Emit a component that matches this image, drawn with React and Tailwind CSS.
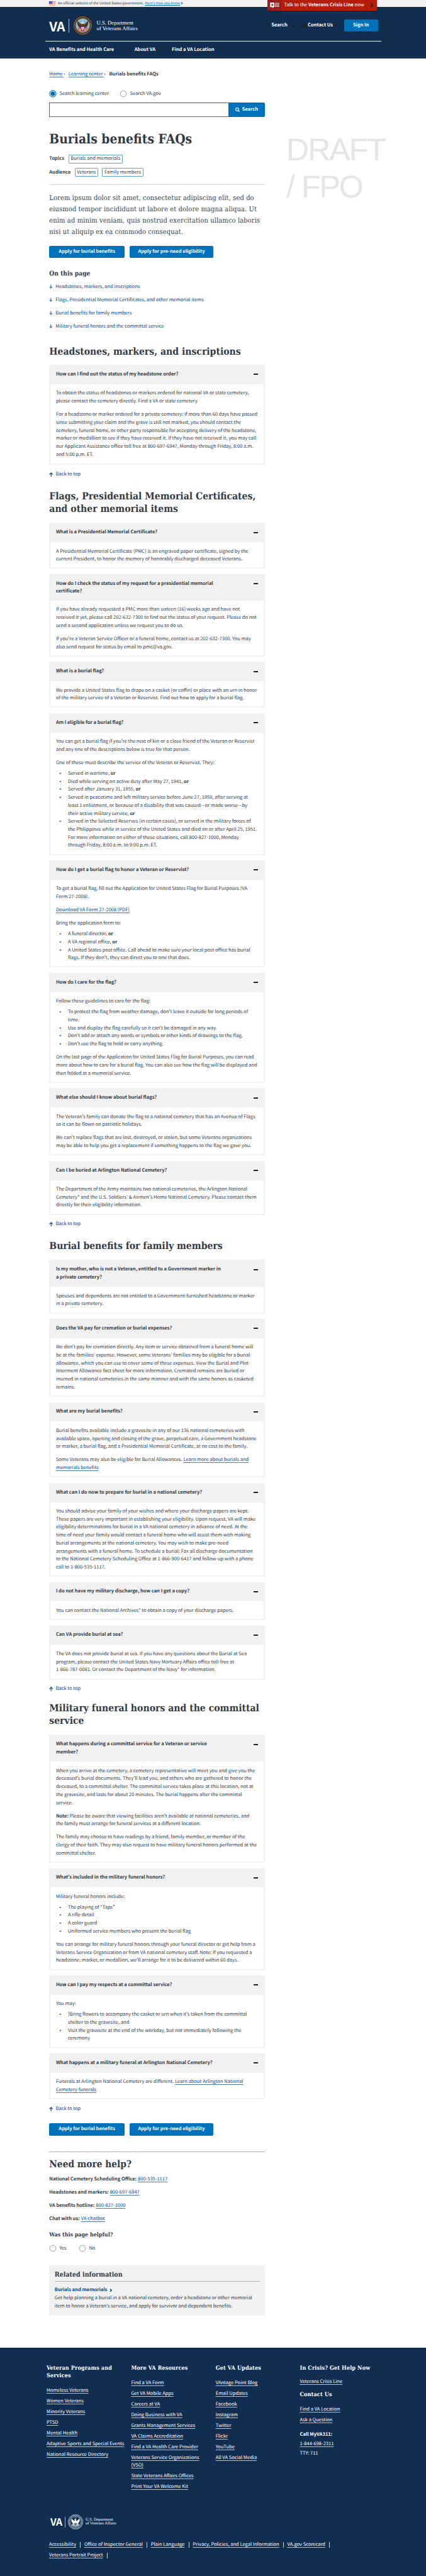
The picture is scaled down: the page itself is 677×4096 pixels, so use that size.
import React from "react";

const SANS = "font-['Noto_Sans_CJK_KR','Noto_Sans',sans-serif]";
const SLAB = "font-['DejaVu_Serif_Condensed','DejaVu_Serif',serif] [font-stretch:condensed]";
const LINK = "text-[#004795] underline decoration-[#004795]/70 decoration-1 underline-offset-[1.5px]";

function Seal({ mono, className }) {
  const gold = mono ? "#fff" : "#d9a62e";
  const rim = mono ? "#112e51" : "#1b1a3c";
  return (
    <svg viewBox="0 0 60 60" className={className}>
      <circle cx="30" cy="30" r="29.5" fill={rim} stroke={mono ? "#fff" : "#171630"} strokeWidth="1" />
      <circle cx="30" cy="30" r="27.6" fill="none" stroke={gold} strokeWidth="1.2" />
      <circle cx="30" cy="30" r="24.6" fill="none" stroke={gold} strokeWidth="2.6" strokeDasharray="1.6 1.3" opacity="0.75" />
      <circle cx="30" cy="30" r="21.4" fill={mono ? "#112e51" : "#7fb7dc"} stroke={gold} strokeWidth="1.3" />
      <path d="M14 41 A19.5 19.5 0 0 0 46 41 L38 33 H22 Z" fill={mono ? "#fff" : "#b9535a"} opacity={mono ? 0.55 : 1} />
      <path d="M17 44 L24 36 M43 44 L36 36 M21 47 L27 38 M39 47 L33 38" stroke="#fff" strokeWidth="1.6" />
      <path d="M28 27 C22 25 18 20 14 16 C12 26 15 34 23 38 L26 42 H34 L37 38 C45 34 48 26 46 16 C42 20 38 25 33 27 L31 21 L26 20 Z" fill={mono ? "#fff" : "#5a3418"} />
      <path d="M26 20 C28 17 33 18 33 22 L31 25 H28 Z" fill="#fff" />
      <path d="M25 32 H35 V38 C35 42 32 44 30 45 C28 44 25 42 25 38 Z" fill={mono ? "#112e51" : "#fff"} stroke={mono ? "#fff" : "#27418a"} strokeWidth="1" />
      <path d="M28.3 36 V43 M31.7 36 V43" stroke={mono ? "#fff" : "#b31b2a"} strokeWidth="1.2" />
      <path d="M25 32 H35 V35 H25 Z" fill={mono ? "#fff" : "#27418a"} />
      <g fill={mono ? "#fff" : "#f2d34a"}>
        <circle cx="26" cy="13" r="1" /><circle cx="30" cy="11.5" r="1" /><circle cx="34" cy="13" r="1" />
        <circle cx="28" cy="16" r="1" /><circle cx="32" cy="16" r="1" />
      </g>
    </svg>
  );
}

function Flag() {
  return (
    <svg viewBox="0 0 20 14" className="h-[7.4px] w-[10.6px]">
      <rect width="20" height="14" fill="#fff" />
      {[0, 4, 8, 12].map((y) => <rect key={y} y={y} width="20" height="2" fill="#f08a70" />)}
      <rect width="10" height="8" fill="#3b3fc0" />
      <path d="M1.5 2 H9 M1.5 4 H9 M1.5 6 H9" stroke="#fff" strokeWidth="0.8" strokeDasharray="1 1.2" />
    </svg>
  );
}

const Chevron = ({ className, d = "M2 1 L6 5 L2 9", box = "0 0 8 10", w = 2 }) => (
  <svg viewBox={box} className={className} fill="none" stroke="currentColor" strokeWidth={w}><path d={d} /></svg>
);
const Down = ({ className }) => <Chevron className={className} box="0 0 12 8" d="M1.5 1.5 L6 6 L10.5 1.5" w={2.6} />;

const Magnifier = ({ className }) => (
  <svg viewBox="0 0 14 14" className={className} fill="none" stroke="currentColor" strokeWidth="2">
    <circle cx="5.7" cy="5.7" r="4.5" /><path d="M9 9 L13 13" strokeWidth="2.6" />
  </svg>
);

const Arrow = ({ up, className }) => (
  <svg viewBox="0 0 12 13" className={className} fill="none" stroke="#004795" strokeWidth="2.1">
    <path d={up ? "M6 13 V2 M1 6.6 L6 1.6 L11 6.6" : "M6 0 V11 M1 6.4 L6 11.4 L11 6.4"} />
  </svg>
);

const Radio = ({ on }) => (
  <svg viewBox="0 0 24 24" className="-ml-[0.7px] size-[12px] shrink-0">
    {on ? (
      <>
        <circle cx="12" cy="12" r="10.2" fill="#fff" stroke="#0071bb" strokeWidth="2.2" />
        <circle cx="12" cy="12" r="7.2" fill="#0071bb" />
      </>
    ) : (
      <circle cx="12" cy="12" r="9.6" fill="#fff" stroke="#5b616b" strokeWidth="1.2" />
    )}
  </svg>
);

const Lines = ({ rows }) => rows.map((r, i) => <div key={i} className="whitespace-nowrap">{r}</div>);
const or = <b>or</b>;

function Accordion({ title, blocks, head = "h-[30.7px]", tail = "pb-[6.5px]" }) {
  return (
    <section className="w-[342.8px]">
      <h3 className={`${head} flex justify-between bg-[#f1f1f1] pt-[8.7px] pr-[11.1px] pl-[10.6px] font-bold`}>
        <span><Lines rows={title} /></span>
        <svg viewBox="0 0 14 4" className="mt-[5.5px] h-[2.1px] w-[7.4px]"><rect width="14" height="4" rx="0.7" fill="#212121" /></svg>
      </h3>
      <div className={`${tail} flex flex-col rounded-b-[1.5px] border-2 border-t-0 border-[#f1f1f1] pt-[8.5px] pl-[8.6px]`}>
        {blocks.map((b, i) =>
          b.list ? (
            <ul key={i} className={i ? "mt-[4.2px]" : ""}>
              {b.list.map((item, j) => (
                <li key={j} className="flex">
                  <span className="w-[19px] shrink-0 pl-[5.7px]">•</span>
                  <div><Lines rows={item} /></div>
                </li>
              ))}
            </ul>
          ) : (
            <div key={i} className={i ? "mt-[8.45px]" : ""}><Lines rows={b} /></div>
          )
        )}
      </div>
    </section>
  );
}

const Group = ({ className, children }) => <div className={`${className} flex flex-col gap-[8.6px]`}>{children}</div>;

const H2 = ({ className, rows }) => (
  <h2 className={`${className} ${SLAB} text-[15.6px] leading-[20.6px] font-bold`}><Lines rows={rows} /></h2>
);

const BackToTop = () => (
  <a className="mt-[8.4px] flex items-center text-[#004795]"><Arrow up className="mr-[3.7px] h-[7px] w-[6.4px]" />Back to top</a>
);

const Buttons = ({ className }) => (
  <div className={`${className} flex gap-[8.3px] font-bold text-white`}>
    <a className="flex h-[19.5px] w-[119.6px] items-center justify-center rounded-[2.6px] bg-[#0071bb] whitespace-nowrap">Apply for burial benefits</a>
    <a className="flex h-[19.5px] w-[132.5px] items-center justify-center rounded-[2.6px] bg-[#0071bb] whitespace-nowrap">Apply for pre-need eligibility</a>
  </div>
);

const Tag = ({ children }) => (
  <span className="mr-[6.3px] flex h-[13.6px] items-center rounded-[1.2px] border border-[#5aa3d4] px-[2.5px]">{children}</span>
);

function Header() {
  return (
    <header>
      <div className="flex h-[10.6px] items-center bg-[#f1f1f1] pl-[78.1px] text-[5.7px] leading-[10.6px] whitespace-nowrap">
        <Flag />
        <span className="ml-[3.3px]">An official website of the United States government.</span>
        <a className="ml-[1.7px] text-[#0071bb] underline underline-offset-[1px]">Here’s how you know</a>
        <Chevron className="ml-[1px] h-[4.4px] w-[4px] text-[#0071bb]" w={2.4} />
      </div>
      <div className="relative h-[82px] bg-[#112e51] text-white">
        <div className="absolute -top-[10.6px] left-[425.3px] flex h-[17px] w-[174px] items-center overflow-hidden rounded-b-[2px] bg-[#b51d09] whitespace-nowrap shadow-sm">
          <span className="flex h-full w-[21.7px] items-center bg-[#981b1e] pl-[3.7px]">
            <svg viewBox="0 0 30 20" className="h-[9.6px] w-[15px]" fill="#fff">
              <path d="M0 0 H14 V15 H11 L9 20 L8 15 H0 Z" />
              <path d="M7 2.5 L8.4 6 H12 L9.2 8.4 L10.2 12 L7 9.8 L3.8 12 L4.8 8.4 L2 6 H5.6 Z" fill="#981b1e" />
              {[16, 21, 26].map((x) => [1, 6, 11].map((y) => <rect key={`${x}-${y}`} x={x} y={y} width="3.6" height="3.6" rx="1" />))}
            </svg>
          </span>
          <span className="ml-[4.5px]">Talk to the <b>Veterans Crisis Line</b> now</span>
          <Chevron className="ml-[9px] h-[7px] w-[5.6px] text-[#212121]" w={2.4} />
        </div>
        <div className="ml-[72px] flex h-[55px] w-[534px] items-center border-b border-white pt-[6px] pl-[6.2px]">
          <span className="w-[24.9px] text-[20.6px] leading-[20px] font-bold tracking-[-0.4px]">VA</span>
          <span className="ml-[5.8px] h-[22px] w-px bg-white/70" />
          <Seal className="ml-[6.6px] size-[31px]" />
          <span className="ml-[6.1px] w-[70px] font-['Liberation_Serif',serif] text-[8.67px] leading-[8.5px] whitespace-nowrap">U.S. Department<br />of Veterans Affairs</span>
          <div className="ml-auto flex items-center font-bold whitespace-nowrap">
            <Magnifier className="h-[6.6px] w-[6.6px] text-[#212121]" />
            <span className="ml-[3px] w-[33px]">Search</span>
            <Down className="mr-[10px] -ml-px h-[4px] w-[6.3px] text-[#212121]" />
            <svg viewBox="0 0 14 14" className="size-[7.4px]"><circle cx="7" cy="7" r="7" fill="#212121" /><path d="M5 5.4 Q5 3.4 7 3.4 Q9 3.4 9 5.2 Q9 6.4 7 7.4 V8.4 M7 9.6 V11.2" fill="none" stroke="#112e51" strokeWidth="1.5" /></svg>
            <span className="ml-[2px] w-[40.2px]">Contact Us</span>
            <Down className="h-[4px] w-[6.3px] text-[#212121]" />
            <a className="mr-[5px] ml-[11px] flex h-[19.6px] w-[54.5px] items-center justify-center rounded-[2.6px] bg-[#0071bb]">Sign In</a>
          </div>
        </div>
        <nav className="flex h-[27px] items-center pt-[1px] pl-[78.3px] font-bold whitespace-nowrap">
          <span className="w-[135.4px]">VA Benefits and Health Care</span>
          <span className="w-[37px]">About VA</span>
          <Down className="mr-[16px] h-[4px] w-[6.3px] text-[#212121]" />
          <span>Find a VA Location</span>
        </nav>
      </div>
    </header>
  );
}

const FootHead = ({ className = "", children }) => (
  <h4 className={`${className} ${SLAB} text-[9px] leading-[11.8px] font-bold tracking-[0.13px] whitespace-nowrap`}>{children}</h4>
);
const FootLinks = ({ className = "mt-[10.2px]", items }) => (
  <ul className={`${className} flex flex-col gap-[4.25px]`}>
    {items.map((t, i) => <li key={i} className="whitespace-nowrap underline decoration-white/70 underline-offset-[1.5px]">{t}</li>)}
  </ul>
);

function Footer() {
  const legal = ["Accessibility", "Office of Inspector General", "Plain Language", "Privacy, Policies, and Legal Information", "VA.gov Scorecard", "Veterans Portrait Project"];
  return (
    <footer className="mt-auto h-[362.9px] bg-[#112e51] pt-[27.9px] leading-[12.7px] text-white">
      <div className="grid h-[237.3px] grid-cols-[134.4px_134.3px_133.8px_1fr] pl-[74px]">
        <div>
          <FootHead>Veteran Programs and<br />Services</FootHead>
          <FootLinks items={["Homeless Veterans", "Women Veterans", "Minority Veterans", "PTSD", "Mental Health", "Adaptive Sports and Special Events", "National Resource Directory"]} />
        </div>
        <div>
          <FootHead>More VA Resources</FootHead>
          <FootLinks items={["Find a VA Form", "Get VA Mobile Apps", "Careers at VA", "Doing Business with VA", "Grants Management Services", "VA Claims Accreditation", "Find a VA Health Care Provider", <>Veterans Service Organizations<br />(VSO)</>, "State Veterans Affairs Offices", "Print Your VA Welcome Kit"]} />
        </div>
        <div>
          <FootHead>Get VA Updates</FootHead>
          <FootLinks items={["VAntage Point Blog", "Email Updates", "Facebook", "Instagram", "Twitter", "Flickr", "YouTube", "All VA Social Media"]} />
        </div>
        <div>
          <FootHead>In Crisis? Get Help Now</FootHead>
          <FootLinks className="mt-[8.2px]" items={["Veterans Crisis Line"]} />
          <FootHead className="mt-[9.2px]">Contact Us</FootHead>
          <FootLinks className="mt-[10.8px]" items={["Find a VA Location", "Ask a Question"]} />
          <div className="mt-[8.9px] leading-[14.9px]">
            <b>Call MyVA311:</b><br />
            <span className="underline decoration-white/70 underline-offset-[1.5px]">1-844-698-2311</span><br />
            TTY: 711
          </div>
        </div>
      </div>
      <div className="flex h-[24.1px] items-center pl-[80px]">
        <span className="w-[18.4px] text-[15.8px] leading-[16px] font-bold tracking-[-0.6px]">VA</span>
        <span className="ml-[4.2px] h-[17.4px] w-px bg-white/60" />
        <Seal mono className="ml-[4.2px] size-[24px]" />
        <span className="ml-[4.2px] font-['Liberation_Serif',serif] text-[6.47px] leading-[6.5px] whitespace-nowrap">U.S. Department<br />of Veterans Affairs</span>
      </div>
      <div className="mt-[18px] ml-[78.1px] flex w-[480px] flex-wrap gap-y-[4.25px] whitespace-nowrap">
        {legal.map((t) => (
          <span key={t} className="flex items-center">
            <span className="underline decoration-white/70 underline-offset-[1.5px]">{t}</span>
            <span className="mr-[5.8px] ml-[6px] h-[8.5px] w-px bg-white/80" />
          </span>
        ))}
      </div>
    </footer>
  );
}

const Contact = ({ label, value }) => (
  <div className="flex h-[21.16px] items-center gap-[2px] whitespace-nowrap"><b>{label}</b><a className={LINK}>{value}</a></div>
);

export default function App() {
  return (
    <div className={`${SANS} flex h-[4096px] w-[677px] flex-col overflow-hidden bg-white text-[7.56px] leading-[12.7px] text-[#323a45] [text-rendering:geometricPrecision]`}>
      <Header />
      <div className="grid grid-cols-[342.8px_1fr] pl-[78.3px]">
        <main className="flex flex-col">
          <div className="mt-[19.4px] flex items-center whitespace-nowrap">
            <span className="w-[30.4px]"><a className={LINK}>Home{"\u00a0"}</a>›</span>
            <span className="w-[64.8px]"><a className={LINK}>Learning center{"\u00a0"}</a>›</span>
            <b>Burials benefits FAQs</b>
          </div>
          <div className="mt-[18.5px] flex h-[12px] items-center whitespace-nowrap">
            <Radio on /><span className="ml-[4.8px] w-[96.2px]">Search learning center</span>
            <Radio /><span className="ml-[4.6px]">Search VA.gov</span>
          </div>
          <div className="mt-[8.3px] flex h-[22.2px]">
            <div className="w-[284.4px] border border-r-0 border-[#5b616b]" />
            <div className="flex w-[58.4px] items-center justify-center gap-[4px] rounded-r-[2.6px] bg-[#0071bb] font-bold text-white">
              <Magnifier className="size-[7.2px]" />Search
            </div>
          </div>
          <h1 className={`${SLAB} mt-[22.5px] text-[20.9px] leading-[26px] font-bold whitespace-nowrap`}>Burials benefits FAQs</h1>
          <div className="mt-[11.8px] flex h-[13.6px] items-center"><b className="mr-[6.7px]">Topics</b><Tag>Burials and memorials</Tag></div>
          <div className="mt-[7.5px] flex h-[13.7px] items-center"><b className="mr-[6.3px]">Audience</b><Tag>Veterans</Tag><Tag>Family members</Tag></div>
          <hr className="mt-[12.4px] border-[#d6d7d9]" />
          <div className={`${SLAB} mt-[12.2px] text-[11px] leading-[18px] tracking-[0.13px]`}>
            <Lines rows={["Lorem ipsum dolor sit amet, consectetur adipiscing elit, sed do", "eiusmod tempor incididunt ut labore et dolore magna aliqua. Ut", "enim ad minim veniam, quis nostrud exercitation ullamco laboris", "nisi ut aliquip ex ea commodo consequat."]} />
          </div>
          <Buttons className="mt-[12.6px]" />
          <h3 className={`${SLAB} mt-[17.8px] text-[10.2px] leading-[14px] font-bold`}>On this page</h3>
          <ul className="mt-[3.1px] text-[#004795]">
            {["Headstones, markers, and inscriptions", "Flags, Presidential Memorial Certificates, and other memorial items", "Burial benefits for family members", "Military funeral honors and the committal service"].map((t) => (
              <li key={t} className="flex h-[21.16px] items-center whitespace-nowrap"><Arrow className="mr-[4.4px] h-[6px] w-[5.6px]" />{t}</li>
            ))}
          </ul>

          <H2 className="mt-[18.6px]" rows={["Headstones, markers, and inscriptions"]} />
          <Group className="mt-[11px]">
            <Accordion tail="pb-[8px]" title={["How can I find out the status of my headstone order?"]} blocks={[
              ["To obtain the status of headstones or markers ordered for national VA or state cemetery,", "please contact the cemetery directly. Find a VA or state cemetery"],
              ["For a headstone or marker ordered for a private cemetery: If more than 60 days have passed", "since submitting your claim and the grave is still not marked, you should contact the", "cemetery, funeral home, or other party responsible for accepting delivery of the headstone,", "marker or medallion to see if they have received it. If they have not received it, you may call", "our Applicant Assistance office toll free at 800-697-6947, Monday through Friday, 8:00 a.m.", "and 5:00 p.m. ET."],
            ]} />
          </Group>
          <BackToTop />

          <H2 className="mt-[18.2px]" rows={["Flags, Presidential Memorial Certificates,", "and other memorial items"]} />
          <Group className="mt-[11.5px]">
            <Accordion title={["What is a Presidential Memorial Certificate?"]} blocks={[
              ["A Presidential Memorial Certificate (PMC) is an engraved paper certificate, signed by the", "current President, to honor the memory of honorably discharged deceased Veterans."],
            ]} />
            <Accordion head="h-[41.8px]" title={["How do I check the status of my request for a presidential memorial", "certificate?"]} blocks={[
              ["If you have already requested a PMC more than sixteen (16) weeks ago and have not", "received it yet, please call 202-632-7300 to find out the status of your request. Please do not", "send a second application unless we request you to do so."],
              ["If you’re a Veteran Service Officer or a funeral home, contact us at 202-632-7300. You may", "also send request for status by email to pmc@va.gov."],
            ]} />
            <Accordion title={["What is a burial flag?"]} blocks={[
              ["We provide a United States flag to drape on a casket (or coffin) or place with an urn in honor", "of the military service of a Veteran or Reservist. Find out how to apply for a burial flag."],
            ]} />
            <Accordion title={["Am I eligible for a burial flag?"]} blocks={[
              ["You can get a burial flag if you’re the next of kin or a close friend of the Veteran or Reservist", "and any one of the descriptions below is true for that person."],
              ["One of these must describe the service of the Veteran or Reservist. They:"],
              { list: [
                [<>Served in wartime, {or}</>],
                [<>Died while serving on active duty after May 27, 1941, {or}</>],
                [<>Served after January 31, 1955, {or}</>],
                ["Served in peacetime and left military service before June 27, 1950, after serving at", "least 1 enlistment, or because of a disability that was caused—or made worse—by", <>their active military service, {or}</>],
                ["Served in the Selected Reserves (in certain cases), or served in the military forces of", "the Philippines while in service of the United States and died on or after April 25, 1951.", "For more information on either of these situations, call 800-827-1000, Monday", "through Friday, 8:00 a.m. to 9:00 p.m. ET."],
              ] },
            ]} />
            <Accordion title={["How do I get a burial flag to honor a Veteran or Reservist?"]} blocks={[
              ["To get a burial flag, fill out the Application for United States Flag for Burial Purposes (VA", "Form 27-2008)."],
              [<a className={LINK}>Download VA Form 27-2008 (PDF)</a>],
              ["Bring the application form to:"],
              { list: [
                [<>A funeral director, {or}</>],
                [<>A VA regional office, {or}</>],
                ["A United States post office. Call ahead to make sure your local post office has burial", "flags. If they don’t, they can direct you to one that does."],
              ] },
            ]} />
            <Accordion title={["How do I care for the flag?"]} blocks={[
              ["Follow these guidelines to care for the flag:"],
              { list: [
                ["To protect the flag from weather damage, don’t leave it outside for long periods of", "time."],
                ["Use and display the flag carefully so it can’t be damaged in any way."],
                ["Don’t add or attach any words or symbols or other kinds of drawings to the flag."],
                ["Don’t use the flag to hold or carry anything."],
              ] },
              ["On the last page of the Application for United States Flag for Burial Purposes, you can read", "more about how to care for a burial flag. You can also see how the flag will be displayed and", "then folded at a memorial service."],
            ]} />
            <Accordion title={["What else should I know about burial flags?"]} blocks={[
              ["The Veteran’s family can donate the flag to a national cemetery that has an Avenue of Flags", "so it can be flown on patriotic holidays."],
              ["We can’t replace flags that are lost, destroyed, or stolen, but some Veterans organizations", "may be able to help you get a replacement if something happens to the flag we gave you."],
            ]} />
            <Accordion title={["Can I be buried at Arlington National Cemetery?"]} blocks={[
              ["The Department of the Army maintains two national cemeteries, the Arlington National", "Cemetery* and the U.S. Soldiers' & Airmen's Home National Cemetery. Please contact them", "directly for their eligibility information."],
            ]} />
          </Group>
          <BackToTop />

          <H2 className="mt-[18.4px]" rows={["Burial benefits for family members"]} />
          <Group className="mt-[11.6px]">
            <Accordion head="h-[42.8px]" title={["Is my mother, who is not a Veteran, entitled to a Government marker in", "a private cemetery?"]} blocks={[
              ["Spouses and dependents are not entitled to a Government-furnished headstone or marker", "in a private cemetery."],
            ]} />
            <Accordion title={["Does the VA pay for cremation or burial expenses?"]} blocks={[
              ["We don’t pay for cremation directly. Any item or service obtained from a funeral home will", "be at the families' expense. However, some Veterans' families may be eligible for a burial", "allowance, which you can use to cover some of these expenses. View the Burial and Plot", "Interment Allowance fact sheet for more information. Cremated remains are buried or", "inurned in national cemeteries in the same manner and with the same honors as casketed", "remains."],
            ]} />
            <Accordion title={["What are my burial benefits?"]} blocks={[
              ["Burial benefits available include a gravesite in any of our 136 national cemeteries with", "available space, opening and closing of the grave, perpetual care, a Government headstone", "or marker, a burial flag, and a Presidential Memorial Certificate, at no cost to the family."],
              [<>Some Veterans may also be eligible for Burial Allowances. <a className={LINK}>Learn more about burials and</a></>, <a className={LINK}>memorials benefits</a>],
            ]} />
            <Accordion title={["What can I do now to prepare for burial in a national cemetery?"]} blocks={[
              ["You should advise your family of your wishes and where your discharge papers are kept.", "These papers are very important in establishing your eligibility. Upon request, VA will make", "eligibility determinations for burial in a VA national cemetery in advance of need. At the", "time of need your family would contact a funeral home who will assist them with making", "burial arrangements at the national cemetery. You may wish to make pre-need", "arrangements with a funeral home. To schedule a burial: Fax all discharge documentation", "to the National Cemetery Scheduling Office at 1-866-900-6417 and follow-up with a phone", "call to 1-800-535-1117."],
            ]} />
            <Accordion title={["I do not have my military discharge, how can I get a copy?"]} blocks={[
              ["You can contact the National Archives* to obtain a copy of your discharge papers."],
            ]} />
            <Accordion title={["Can VA provide burial at sea?"]} blocks={[
              ["The VA does not provide burial at sea. If you have any questions about the Burial at Sea", "program, please contact the United States Navy Mortuary Affairs office toll-free at", "1-866-787-0081. Or contact the Department of the Navy* for information."],
            ]} />
          </Group>
          <BackToTop />

          <H2 className="mt-[14.2px]" rows={["Military funeral honors and the committal", "service"]} />
          <Group className="mt-[11.4px]">
            <Accordion head="h-[42.8px]" title={["What happens during a committal service for a Veteran or service", "member?"]} blocks={[
              ["When you arrive at the cemetery, a cemetery representative will meet you and give you the", "deceased’s burial documents. They’ll lead you, and others who are gathered to honor the", "deceased, to a committal shelter. The committal service takes place at this location, not at", "the gravesite, and lasts for about 20 minutes. The burial happens after the committal", "service."],
              [<><b>Note:</b> Please be aware that viewing facilities aren’t available at national cemeteries, and</>, "the family must arrange for funeral services at a different location."],
              ["The family may choose to have readings by a friend, family member, or member of the", "clergy of their faith. They may also request to have military funeral honors performed at the", "committal shelter."],
            ]} />
            <Accordion title={["What’s included in the military funeral honors?"]} blocks={[
              ["Military funeral honors include:"],
              { list: [["The playing of “Taps”"], ["A rifle detail"], ["A color guard"], ["Uniformed service members who present the burial flag"]] },
              ["You can arrange for military funeral honors through your funeral director or get help from a", "Veterans Service Organization or from VA national cemetery staff. Note: If you requested a", "headstone, marker, or medallion, we’ll arrange for it to be delivered within 60 days."],
            ]} />
            <Accordion title={["How can I pay my respects at a committal service?"]} blocks={[
              ["You may:"],
              { list: [
                ["]Bring flowers to accompany the casket or urn when it’s taken from the committal", "shelter to the gravesite, and"],
                ["Visit the gravesite at the end of the workday, but not immediately following the", "ceremony"],
              ] },
            ]} />
            <Accordion title={["What happens at a military funeral at Arlington National Cemetery?"]} blocks={[
              [<>Funerals at Arlington National Cemetery are different. <a className={LINK}>Learn about Arlington National</a></>, <a className={LINK}>Cemetery funerals</a>],
            ]} />
          </Group>
          <BackToTop />

          <Buttons className="mt-[16.7px]" />
          <hr className="mt-[25.7px] border-[#aeb0b5]" />
          <h2 className={`${SLAB} mt-[9.1px] text-[15.3px] leading-[20.6px] font-bold`}>Need more help?</h2>
          <div className="mt-[2.8px]">
            <Contact label="National Cemetery Scheduling Office:" value="800-535-1117" />
            <Contact label="Headstones and markers:" value="800-697-6947" />
            <Contact label="VA benefits hotline:" value="800-827-1000" />
            <Contact label="Chat with us:" value="VA chatbot" />
          </div>
          <h3 className={`${SLAB} mt-[8px] text-[8.9px] leading-[14px] font-bold`}>Was this page helpful?</h3>
          <div className="mt-[8.1px] flex h-[12px] items-center">
            <Radio /><span className="ml-[4.6px] w-[31.3px]">Yes</span>
            <Radio /><span className="ml-[4.6px]">No</span>
          </div>
          <aside className="mt-[20.5px] h-[80.4px] bg-[#f1f1f1] px-[8.5px] pt-[8.5px]">
            <h3 className={`${SLAB} border-b border-[#aeb0b5] pb-[2.2px] text-[10.6px] leading-[14px] font-bold`}>Related information</h3>
            <div className="mt-[7.5px] flex items-center font-bold text-[#004795]">Burials and memorials<Chevron className="ml-[3.5px] h-[5.4px] w-[4.3px]" w={2.6} /></div>
            <Lines rows={["Get help planning a burial in a VA national cemetery, order a headstone or other memorial", "item to honor a Veteran's service, and apply for survivor and dependent benefits."]} />
          </aside>
        </main>
        <aside className="mt-[116.6px] ml-[34px] font-['Liberation_Sans',Arial,sans-serif] text-[50px] leading-[58.8px] tracking-[-2px] whitespace-nowrap text-[#e4e5e7]">
          DRAFT<br />/ FPO
        </aside>
      </div>
      <Footer />
    </div>
  );
}
